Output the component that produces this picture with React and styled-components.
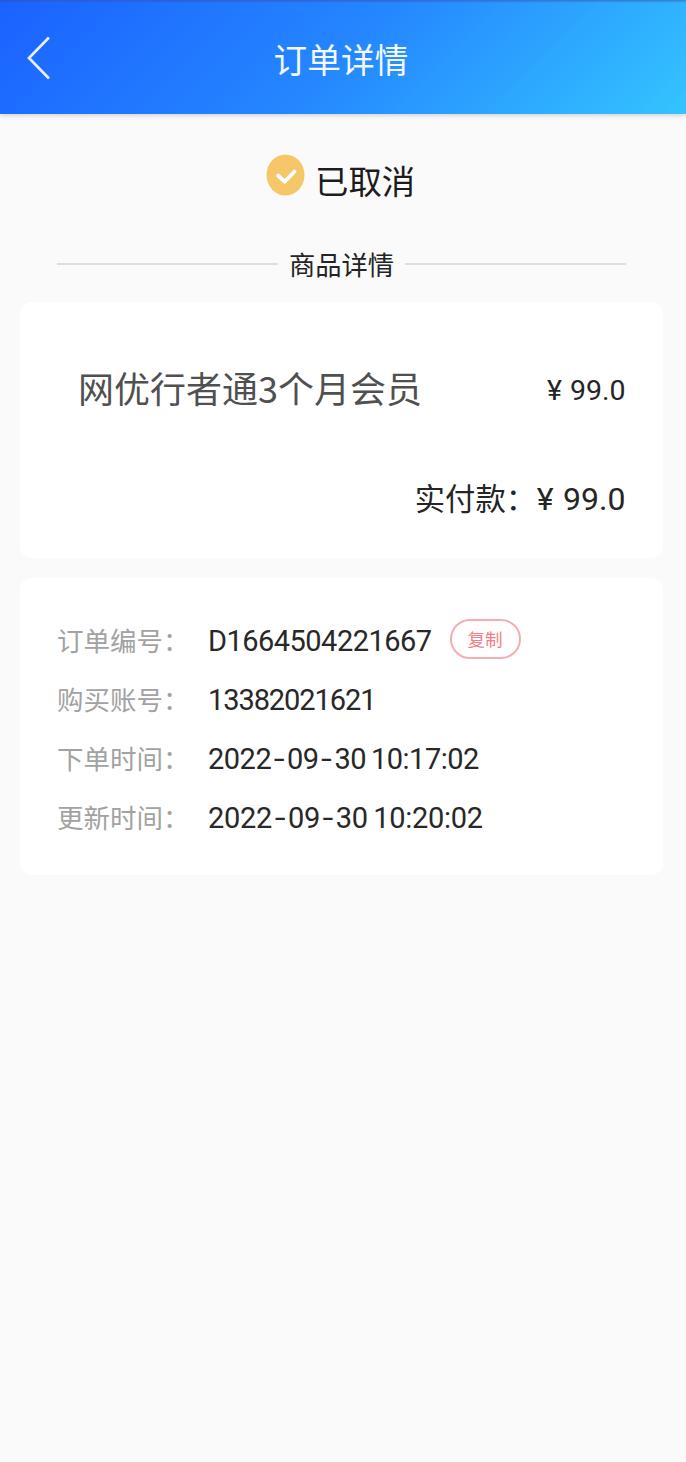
import React from "react";
import styled, { createGlobalStyle } from "styled-components";

const GlobalStyle = createGlobalStyle`
  * { box-sizing: border-box; }
  body {
    margin: 0;
    background: #fafafa;
    font-family: Roboto, "Noto Sans CJK SC", sans-serif;
    color: #222;
  }
`;

const Page = styled.div`
  width: 100%;
  min-height: 1462px;
  background: #fafafa;
`;

const Header = styled.header`
  display: grid;
  grid-template-columns: 100px 482px 100px;
  align-items: center;
  height: 114px;
  padding-top: 2px;
  background:
    linear-gradient(rgba(60, 70, 160, 0.5), rgba(60, 70, 160, 0) 3px),
    linear-gradient(135deg, #1b62ff 0%, #2587ff 50%, #34c4ff 100%);
  box-shadow: 0 1px 5px rgba(0, 0, 0, 0.2);
`;

const BackButton = styled.button`
  display: flex;
  padding: 0 0 0 26px;
  border: 0;
  background: none;
`;

const Title = styled.h1`
  margin: 0;
  padding-top: 2px;
  text-align: center;
  font: 400 33.7px/50px "Noto Sans CJK SC", sans-serif;
  color: #f3f9ff;
`;

const Content = styled.main`
  width: 682px;
  padding: 0 19px 0 20px;
`;

const Status = styled.div`
  display: flex;
  align-items: center;
  height: 134px;
  padding-left: 245.5px;
`;

const StatusIcon = styled.svg`
  flex: none;
  margin: -12px 10.5px 0 0;
`;

const StatusText = styled.div`
  margin-top: -2px;
  font: 400 33.4px/50px "Noto Sans CJK SC", sans-serif;
  color: #1c1c1c;
`;

const Divider = styled.div`
  display: flex;
  align-items: center;
  height: 32px;
  margin: 0 37px 22px;
  font: 400 26.3px/32px "Noto Sans CJK SC", sans-serif;
  white-space: nowrap;
  color: #242424;

  &::before,
  &::after {
    content: "";
    flex: 1;
    height: 2px;
    background: #dedede;
  }
  &::before { margin-right: 11px; }
  &::after { margin-left: 11px; }
`;

const Card = styled.section`
  height: ${(p) => p.$height}px;
  margin-bottom: 20px;
  padding: ${(p) => p.$padding};
  border-radius: 12px;
  background: #fff;
`;

const ProductRow = styled.div`
  display: flex;
  align-items: center;
  justify-content: space-between;
  height: 60px;
`;

const ProductName = styled.div`
  margin-top: -4px;
  font: 400 36px/60px "Noto Sans CJK SC", sans-serif;
  color: #505050;
`;

const Amount = styled.span`
  display: inline-flex;
  align-items: baseline;
  gap: ${(p) => p.$gap}px;
  padding-top: 4px;
  font-size: ${(p) => p.$size}px;
  line-height: 60px;
  color: #252525;
`;

const TotalRow = styled.div`
  display: flex;
  align-items: center;
  justify-content: flex-end;
  height: 60px;
  margin-top: 48px;
`;

const TotalLabel = styled.span`
  width: 122px;
  font: 400 30.3px/60px "Noto Sans CJK SC", sans-serif;
  white-space: nowrap;
  color: #252525;
`;

const InfoRow = styled.div`
  display: flex;
  align-items: center;
  height: 58.8px;
`;

const InfoLabel = styled.span`
  width: 151px;
  font: 400 26.5px/58px "Noto Sans CJK SC", sans-serif;
  white-space: nowrap;
  color: #a2a2a2;
`;

const InfoValue = styled.span`
  padding-top: 2px;
  font-size: 29px;
  line-height: 58px;
  letter-spacing: ${(p) => p.$spacing}px;
  word-spacing: -1.7px;
  white-space: nowrap;
  color: #282828;
`;

const Hyphen = styled.span`
  display: inline-block;
  width: 15.8px;
  font-family: Inter, sans-serif;
  line-height: 1;
  text-align: center;
  letter-spacing: 0;
`;

const CopyButton = styled.button`
  width: 71px;
  height: 40px;
  margin: -3px 0 0 18px;
  padding: 0;
  border: 2px solid #f5aeb0;
  border-radius: 20px;
  background: #fff;
  font: 400 17.6px/34px "Noto Sans CJK SC", sans-serif;
  color: #f17d82;
`;

const details = [
  { label: "订单编号：", value: "D1664504221667", spacing: -0.53, copy: true },
  { label: "购买账号：", value: "13382021621", spacing: -1.08 },
  { label: "下单时间：", value: "2022-09-30 10:17:02", spacing: -0.5 },
  { label: "更新时间：", value: "2022-09-30 10:20:02", spacing: -0.26 },
];

function ValueText({ text }) {
  return text.split("-").map((part, i) => (
    <React.Fragment key={i}>
      {i > 0 && <Hyphen>-</Hyphen>}
      {part}
    </React.Fragment>
  ));
}

export default function App() {
  return (
    <Page>
      <GlobalStyle />
      <Header>
        <BackButton aria-label="返回">
          <svg width="26" height="46" viewBox="0 0 26 46" fill="none">
            <path d="M23 2.5 3 23 23 43.5" stroke="#e4efff" strokeWidth="2.7" />
          </svg>
        </BackButton>
        <Title>订单详情</Title>
      </Header>
      <Content>
        <Status>
          <StatusIcon width="39" height="42" viewBox="0 0 39 42">
            <ellipse cx="19.5" cy="21" rx="19" ry="20.5" fill="#f6c768" />
            <path d="m12 21.5 6.7 6.2L28.5 17.5" fill="none" stroke="#fff" strokeWidth="3.8" strokeLinecap="round" />
          </StatusIcon>
          <StatusText>已取消</StatusText>
        </Status>
        <Divider>商品详情</Divider>
        <Card $height={256} $padding="57px 37.5px 0 58px">
          <ProductRow>
            <ProductName>网优行者通3个月会员</ProductName>
            <Amount $size={28.5} $gap={8}><span>¥</span><span>99.0</span></Amount>
          </ProductRow>
          <TotalRow>
            <TotalLabel>实付款：</TotalLabel>
            <Amount $size={32} $gap={9.5}><span>¥</span><span>99.0</span></Amount>
          </TotalRow>
        </Card>
        <Card $height={297} $padding="33px 37px 0">
          {details.map((item) => (
            <InfoRow key={item.label}>
              <InfoLabel>{item.label}</InfoLabel>
              <InfoValue $spacing={item.spacing}><ValueText text={item.value} /></InfoValue>
              {item.copy && <CopyButton>复制</CopyButton>}
            </InfoRow>
          ))}
        </Card>
      </Content>
    </Page>
  );
}
